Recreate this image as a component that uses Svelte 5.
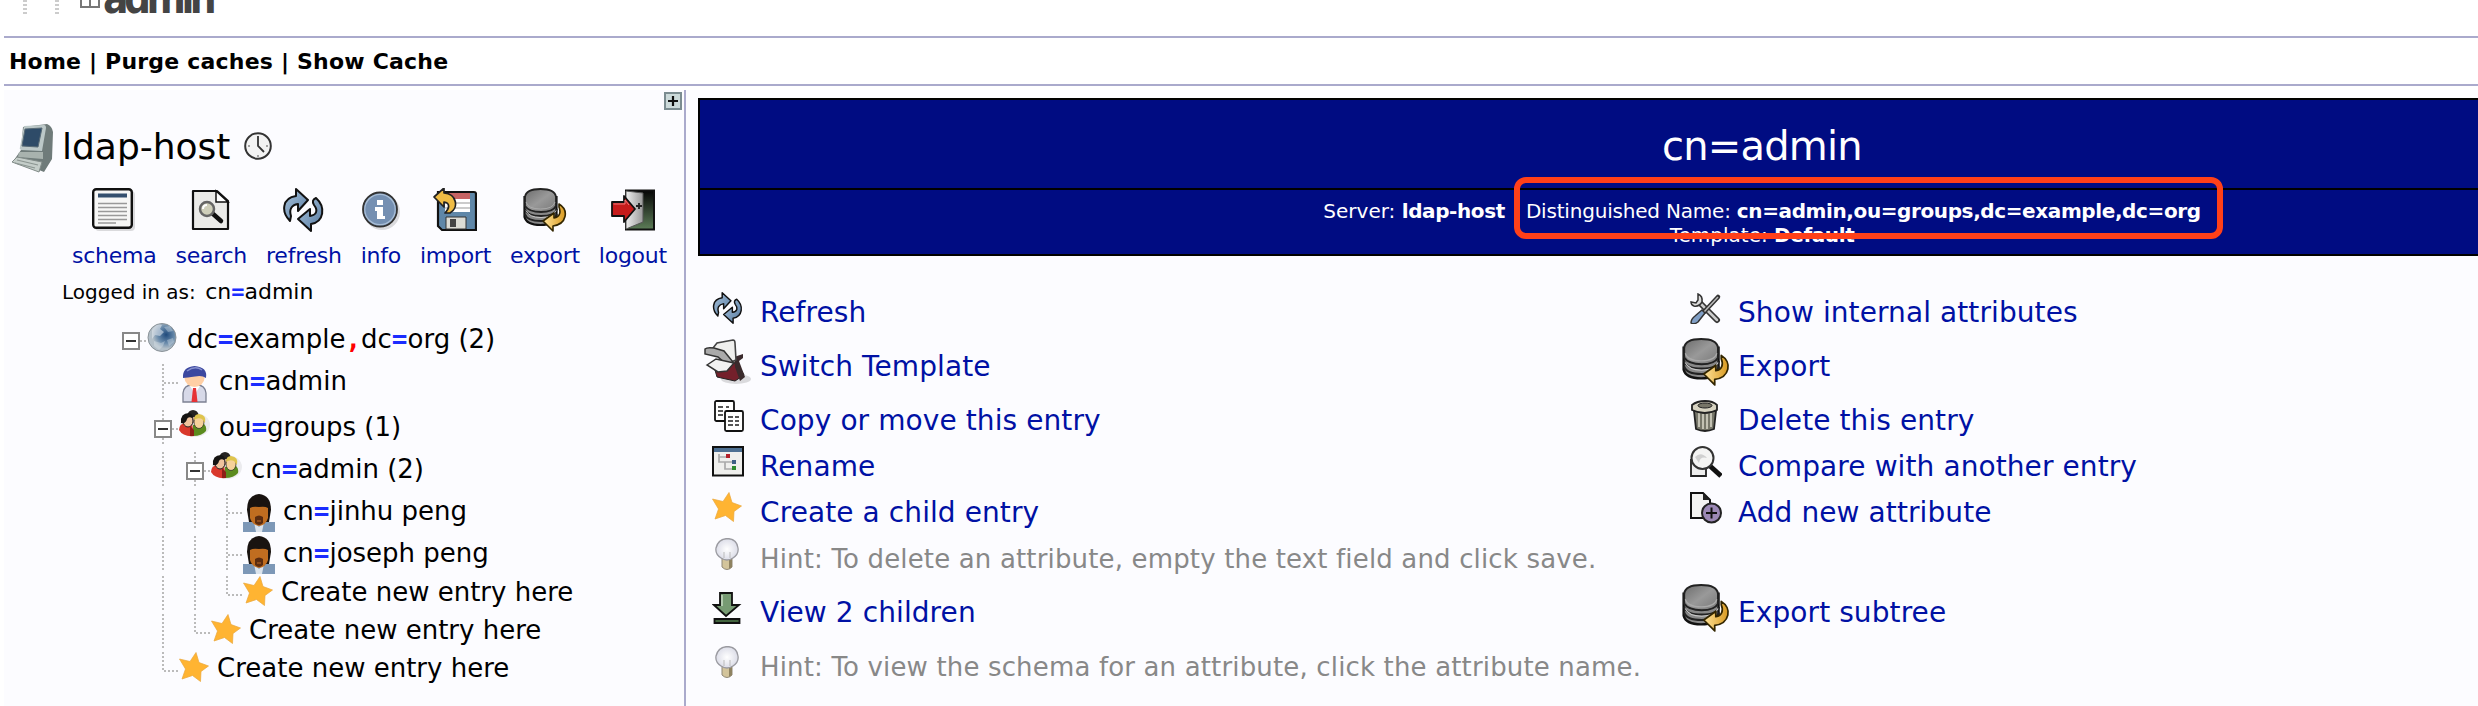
<script>
  const tools = [
    { icon: 'schema', label: 'schema' },
    { icon: 'search', label: 'search' },
    { icon: 'refresh', label: 'refresh' },
    { icon: 'info', label: 'info' },
    { icon: 'import', label: 'import' },
    { icon: 'export', label: 'export' },
    { icon: 'logout', label: 'logout' }
  ];

  const tree = [
    { h: 42, guides: ['box root'], icon: 'globe', dn: ['dc', '=', 'example', ',', 'dc', '=', 'org (2)'] },
    { h: 46, guides: ['', 'tee'], icon: 'person', dn: ['cn', '=', 'admin'] },
    { h: 42, guides: ['', 'box'], icon: 'group', dn: ['ou', '=', 'groups (1)'] },
    { h: 42, guides: ['', 'line', 'box'], icon: 'group', dn: ['cn', '=', 'admin (2)'] },
    { h: 42, guides: ['', 'line', 'line', 'tee'], icon: 'user', dn: ['cn', '=', 'jinhu peng'] },
    { h: 40, guides: ['', 'line', 'line', 'tee'], icon: 'user', dn: ['cn', '=', 'joseph peng'] },
    { h: 38, guides: ['', 'line', 'line', 'end'], icon: 'star', create: true },
    { h: 38, guides: ['', 'line', 'end'], icon: 'star', create: true },
    { h: 38, guides: ['', 'end'], icon: 'star', create: true }
  ];

  const actions = [
    [{ icon: 'refresh', label: 'Refresh' }, { icon: 'tools', label: 'Show internal attributes' }],
    [{ icon: 'switch', label: 'Switch Template', big: true }, { icon: 'export', label: 'Export', big: true }],
    [{ icon: 'copy', label: 'Copy or move this entry' }, { icon: 'trash', label: 'Delete this entry' }],
    [{ icon: 'rename', label: 'Rename' }, { icon: 'compare', label: 'Compare with another entry' }],
    [{ icon: 'star', label: 'Create a child entry' }, { icon: 'add', label: 'Add new attribute' }],
    [{ icon: 'bulb', label: 'Hint: To delete an attribute, empty the text field and click save.', hint: true }],
    [{ icon: 'down', label: 'View 2 children' }, { icon: 'export', label: 'Export subtree', big: true }],
    [{ icon: 'bulb', label: 'Hint: To view the schema for an attribute, click the attribute name.', hint: true }]
  ];
</script>

{#snippet icon(name)}
  {#if name === 'schema'}
    <svg viewBox="0 0 44 44"><rect x="3" y="3" width="40" height="40" rx="4" fill="#0002" /><rect x="1.2" y="1.2" width="38.6" height="38.6" rx="3" fill="#f7f7f6" stroke="#111" stroke-width="2.4" /><rect x="6" y="5.500" width="29" height="4" fill="#35506f" /><path d="M6 15.500h29M6 19.500h29M6 23.500h29M6 27.500h29M6 31.500h29M6 35h18" stroke="#999" stroke-width="1.700" /></svg>
  {:else if name === 'search'}
    <svg viewBox="0 0 44 44"><path d="M4 3h24l11 10v28H4z" fill="#ebebe9" stroke="#111" stroke-width="2.200" stroke-linejoin="round" /><path d="M27 3v11h12z" fill="#fff" stroke="#111" stroke-width="1.500" /><path d="m23 25 9 8" stroke="#111" stroke-width="4.500" stroke-linecap="round" /><circle cx="18" cy="21" r="7" fill="#cfcfba" stroke="#666" stroke-width="2.500" /><path d="M14 21q0-4 4-4" stroke="#fff" stroke-width="2" fill="none" /></svg>
  {:else if name === 'refresh'}
    <svg viewBox="0 0 44 44"><g fill="url(#blue)" stroke="#111" stroke-width="2" stroke-linejoin="round"><path d="M8 33C-1 24 0 10 14 8V1l12 11-10 11v-7c-7 1-9 6-7 12z" /><path d="M34 10c10 9 8 24-5 26v7L16 31l12-10v7c7-1 8-6 4-11q-3-5 2-7z" /></g></svg>
  {:else if name === 'info'}
    <svg viewBox="0 0 44 44"><circle cx="22" cy="24" r="18" fill="#0002" /><circle cx="20" cy="21.500" r="17" fill="#7590b2" stroke="#333" stroke-width="1.800" /><circle cx="20" cy="21.500" r="15.200" fill="none" stroke="#a9bed6" stroke-width="1.200" /><path d="M17 12h6v5h-6zM15 19h8v9h2v3H17v-8h-2z" fill="#fff" /></svg>
  {:else if name === 'import'}
    <svg viewBox="0 0 44 44"><path d="M5 4h36q2 0 2 2v36H9l-4-4z" fill="#5f87a8" stroke="#111" stroke-width="2.200" /><path d="M12 5h25v19H12z" fill="#fff" /><path d="M12 5h25v6H12z" fill="#c76363" /><path d="M12 15h25M12 20h25" stroke="#bbb" stroke-width="1.500" /><path d="M13 29h20v12H13z" fill="#dcdcd5" stroke="#333" /><path d="M17 31h6v8h-6z" fill="#444" /><path d="M1 9 11 0v5c13 1 15 15 6 20h-5c5-5 5-10-1-11v5z" fill="#efbc45" stroke="#222" stroke-width="1.700" stroke-linejoin="round" /></svg>
  {:else if name === 'export'}
    <svg viewBox="0 0 44 44"><path d="M1.500 9v20q2 8 16 8t16-8V9z" fill="#888" stroke="#111" stroke-width="2.200" /><path d="M2 21q2 7 16 7t16-7M2 26q2 7 16 7t16-7" fill="none" stroke="#222" stroke-width="1.800" /><path d="M3 22.500q3 7 15 7t15-7" fill="none" stroke="#c7c7c7" /><path d="M2 9q1-8 15.500-8T33 9v9q-3 6-15 6T2 18z" fill="url(#gray)" stroke="#222" stroke-width="1.800" /><path d="M3 14q2 7 14.500 7T32 14" fill="none" stroke="#aaa" /><path d="M36 16c10 6 8 20-6 22v5L20 33l11-8v5c6-1 7-6 5-11z" fill="url(#gold)" stroke="#332600" stroke-width="1.600" stroke-linejoin="round" /></svg>
  {:else if name === 'logout'}
    <svg viewBox="0 0 44 44"><path d="M15 2.500h28v39H15z" fill="url(#door)" stroke="#111" stroke-width="2" /><path d="m15 3 17 2v29l-17 7z" fill="url(#panel)" stroke="#555" /><path d="M25 18h6M28 15v6" stroke="#222" stroke-width="1.800" /><path d="M1 14h12V8l11 13-11 13v-6H1z" fill="#c61b1b" stroke="#111" stroke-width="1.800" stroke-linejoin="round" /><path d="M2.500 16H14v-4l4 5" fill="none" stroke="#ee7a7a" /></svg>
  {:else if name === 'globe'}
    <svg viewBox="0 0 32 32"><circle cx="15" cy="15.500" r="14" fill="url(#earth)" stroke="#8a9298" /><path d="M5 8q5-7 10-5l-2 4 4 3-4 4-5-1-3 4z" fill="#e3eaf0" opacity=".55" /><path d="M17 5l6-1 3 5-5 1zM7 19l7 2 4-2-2 5-4 4-5-4zM20 18l6-2 1 4-5 4z" fill="#e3eaf0" opacity=".35" /></svg>
  {:else if name === 'person'}
    <svg viewBox="0 0 32 40"><path d="M4 38V29q1-8 9-8h5q8 0 9 8v9z" fill="#d7d9e8" stroke="#7c8092" stroke-width="1.300" /><path d="m11 22 5 8 5-8z" fill="#fff" /><path d="m14 24-1.500 14h6L17 24z" fill="#e63236" /><ellipse cx="15.500" cy="14" rx="10" ry="9" fill="#ffcfa5" /><path d="M4 14Q3 3 15.500 2 29 3 27 14q-4-3-11-1.500-8 1-12 1.500z" fill="#3c48a0" /><path d="M8 7q8-6 15-1" stroke="#8791ce" stroke-width="1.500" fill="none" /></svg>
  {:else if name === 'group'}
    <svg viewBox="0 0 32 32"><ellipse cx="16" cy="15" rx="15" ry="12" fill="#0001" /><circle cx="14" cy="5.500" r="5.500" fill="#262321" /><path d="M10 7h9v6h-9z" fill="#c9a08a" /><path d="M0 20q0-6 6-7h7l2 13Q4 27 0 20z" fill="#d9382c" /><path d="M14 26V15l10-2q4 3 3 8-4 5-13 5z" fill="#5b8b1e" /><ellipse cx="9" cy="11" rx="5" ry="6" fill="#efc39e" stroke="#222" /><path d="M2 13q-1-10 8-10 4 1 4 5-5-2-6 1-1 5-6 4z" fill="#151413" /><ellipse cx="20" cy="12" rx="5" ry="6.500" fill="#f6d19a" stroke="#222" stroke-width=".7" /><path d="M15 10q0-6 5-6 8 1 6 9l-3-4q-4-2-8 1z" fill="#dfc44d" /><path d="M11 26V16l4 4v6z" fill="#8d2018" /></svg>
  {:else if name === 'user'}
    <svg viewBox="0 0 32 38"><path d="M0 38V28h32v10z" fill="#7d98b7" /><path d="m11 28 5 5 5-5-2 10h-6z" fill="#dbe3ec" /><path d="M4 16Q4 1 16 0q12 1 12 16l-2 12H6z" fill="#191310" /><path d="M7 14q3-2 9-1 6-1 9 1v10q-2 7-9 8-7-1-9-8z" fill="#c06d20" /><path d="M12 23q4-3 8 0v6q-4 4-8 0z" fill="#5b2c10" /><path d="M14 26h4v2h-4z" fill="#8b4a1c" /></svg>
  {:else if name === 'star'}
    <svg viewBox="0 0 32 32"><path d="M17 .5 20 10.500 29.500 14 22 19.500 21.500 29.500 13.500 23.500 3 27 6.500 17 .500 7 11 9.500z" fill="#ffb432" stroke="#e9a63a" stroke-width=".7" /></svg>
  {:else if name === 'switch'}
    <svg viewBox="0 0 48 48"><ellipse cx="32" cy="41" rx="15" ry="5" fill="#0002" /><path d="m11 32 22-8 7 13-9 6-18-4z" fill="#74202b" stroke="#222" /><path d="m30 19 9-3v4l-4 3 6 16-5 4-5-14z" fill="#3a2a2c" /><path d="m9 10 4-5 16-3q2 0 2 3l1 17-12 5z" fill="#efefed" stroke="#444" stroke-width="1.600" /><path d="M1 11q2-2 9-1l10 3 9 11-7 2-8-7L1 16z" fill="#aaa" stroke="#333" stroke-width="1.500" /><path d="m3 27 9-6 18 4-7 8-9 1z" fill="#f2f2f2" stroke="#333" stroke-width="1.500" /></svg>
  {:else if name === 'copy'}
    <svg viewBox="0 0 32 32"><g fill="#fff" stroke="#111" stroke-width="1.800"><rect x="3" y="1" width="19" height="20" rx="1.500" /><rect x="13" y="11" width="18" height="20" rx="1.500" /></g><path d="M6 7h5M14 7h3M6 11h5M6 15h5M16 17h5M23 17h4M16 21h5M23 21h4M16 25h5M23 25h4" stroke="#555" stroke-width="1.800" /></svg>
  {:else if name === 'rename'}
    <svg viewBox="0 0 32 32"><rect x="1" y="1" width="30" height="28.500" fill="#efefed" stroke="#111" stroke-width="2" /><path d="M2 2h28v4H2z" fill="#4d6f92" /><path d="M7 8v8h5M7 11h7M12 16h8M13 16v7h7" fill="none" stroke="#aaa" stroke-width="1.700" /><path d="M14 8h4v4h-4z" fill="#b3202a" /><path d="M20 14h4v4h-4z" fill="#3f5f85" /><path d="M20 20h4v4h-4z" fill="#2e8b2e" /></svg>
  {:else if name === 'bulb'}
    <svg viewBox="0 0 32 32"><path d="M10 20h10v9q-5 5-10 0z" fill="#d3c49b" stroke="#908878" /><path d="M17 20h3v9l-3 2z" fill="#8e8261" /><path d="M9 20Q3 16 4 10q2-9 11.500-9.500Q25 1 26 10q1 6-5 10-6 4-12 0z" fill="url(#glass)" stroke="#9a9aa0" stroke-width="1.300" /><path d="M12 14v6M18 14v6" stroke="#bbb" /></svg>
  {:else if name === 'down'}
    <svg viewBox="0 0 32 32"><path d="M8 1h12v12h7L14 24 2 13h6z" fill="#779b73" stroke="#111" stroke-width="1.800" /><path d="M10 3v11" stroke="#b4cbb0" stroke-width="2" /><path d="M2.500 27h25v4h-25z" fill="#42643e" stroke="#111" stroke-width="1.800" /></svg>
  {:else if name === 'tools'}
    <svg viewBox="0 0 32 32"><path d="m10 11 17 17" stroke="#333" stroke-width="6" stroke-linecap="round" /><path d="m9 10 18 18" stroke="#ccc" stroke-width="2.500" stroke-linecap="round" /><path d="M8 2q5 2 4 8-3 5-8 4-3-1-3-4l5 1 2-3z" fill="#ddd" stroke="#333" stroke-width="1.500" /><path d="M28 5 14 20" stroke="#333" stroke-width="4.500" stroke-linecap="round" /><path d="M28 5 14 20" stroke="#bbb" stroke-width="1.500" /><path d="m12 18 3 3-7 9q-4 3-7 1 0-4 4-7z" fill="#809fc6" stroke="#333" stroke-width="1.500" /></svg>
  {:else if name === 'trash'}
    <svg viewBox="0 0 32 32"><path d="M4 11h22l-2 18q-9 4-18 0z" fill="#77776a" stroke="#222" stroke-width="1.800" /><path d="M9 13v14M13 14v15M17 14v15M21 13v14" stroke="#d0cec0" stroke-width="1.700" /><path d="M2 5q5-4 13-4t12 4v5q-12 6-25 0z" fill="#d7d3c1" stroke="#222" stroke-width="1.800" /><ellipse cx="15" cy="5.500" rx="7" ry="2.500" fill="#777567" stroke="#222" /></svg>
  {:else if name === 'compare'}
    <svg viewBox="0 0 32 32"><path d="M1 14v16h15V14z" fill="#ededed" stroke="#222" stroke-width="1.800" /><path d="m20 20 11 10" stroke="#111" stroke-width="5" /><circle cx="12.500" cy="12" r="11" fill="#f4f4f3" stroke="#333" stroke-width="2" /><path d="M5 11q6-6 12 1-7-2-8 5" fill="#d0d0d0" /></svg>
  {:else if name === 'add'}
    <svg viewBox="0 0 32 32"><path d="M1 1h12l7 7v18H1z" fill="#f3f3f1" stroke="#111" stroke-width="2" /><path d="M13 1v7h7z" fill="#222" /><circle cx="21.500" cy="21" r="9.500" fill="#9b88b5" stroke="#222" stroke-width="2" /><path d="M16 21h11M21.500 15.500v11" stroke="#111" stroke-width="2" /></svg>
  {/if}
{/snippet}

<svg class="defs" aria-hidden="true"><defs>
  <linearGradient id="blue" x2="1" y2="1"><stop stop-color="#a9c4dd" /><stop offset="1" stop-color="#55799f" /></linearGradient>
  <linearGradient id="gray" x2="1" y2="1"><stop stop-color="#6d6d6d" /><stop offset=".5" stop-color="#999" /><stop offset="1" stop-color="#777" /></linearGradient>
  <linearGradient id="gold"><stop stop-color="#ffe39a" /><stop offset="1" stop-color="#d99a20" /></linearGradient>
  <linearGradient id="door" y2="1" x2="0"><stop stop-color="#050505" /><stop offset="1" stop-color="#5d7d58" /></linearGradient>
  <linearGradient id="panel"><stop stop-color="#eee" /><stop offset="1" stop-color="#999" /></linearGradient>
  <radialGradient id="earth" cx=".65" cy=".4"><stop stop-color="#204a7c" /><stop offset=".6" stop-color="#6a8bab" /><stop offset="1" stop-color="#b3bfc8" /></radialGradient>
  <radialGradient id="glass"><stop stop-color="#fff" /><stop offset="1" stop-color="#dcdde8" /></radialGradient>
</defs></svg>

<div class="page">
  <header class="logo">
    <i class="dots"></i><i class="dots"></i>
    <span class="logobox"></span><span class="logotext">admin</span>
  </header>
  <nav class="menu">Home | Purge caches | Show Cache</nav>

  <div class="body">
    <aside>
      <div class="expand"><svg viewBox="0 0 18 18"><rect x="1" y="1" width="16" height="16" fill="#ccdada" stroke="#7b8c90" stroke-width="2" /><path d="M4 9h10M9 4v10" stroke="#111" stroke-width="2.200" /></svg></div>
      <div class="host">
        <svg class="computer" viewBox="0 0 42 50"><path d="m11 4 24-3q5 2 6 8l-1 27-8 13L2 37l7-10z" fill="#6f7b7a" /><path d="m12 3 20-1q2 0 2 3l-4 23-21-1q-2-1-1-3z" fill="#bcc8c8" /><path d="m13 6 17-1-4 19-16-1z" fill="#2e4b68" stroke="#576a76" /><path d="M7 29h24v7L6 34z" fill="#a8b2ae" /><path d="m5 34 25 5-3 10L0 39z" fill="#c4cdc9" stroke="#818b88" /><path d="m5 37 21 5M3 40l20 5" stroke="#8b9591" stroke-width="1.200" /></svg>
        <span>ldap-host</span>
        <svg class="clock" viewBox="0 0 28 28"><circle cx="14" cy="14" r="12.800" fill="#f3f3f3" stroke="#333" stroke-width="2" /><path d="M14 4v10l6 6" fill="none" stroke="#333" stroke-width="1.800" /><path d="M4 14h2M22 14h2M14 23v2" stroke="#888" stroke-width="1.500" /></svg>
      </div>
      <div class="tools">
        {#each tools as t}
          <a class="tool {t.icon}" href="#{t.icon}"><span class="ico">{@render icon(t.icon)}</span><span>{t.label}</span></a>
        {/each}
      </div>
      <div class="login">Logged in as: <span class="who">cn<b class="eq">=</b>admin</span></div>
      <div class="tree">
        {#each tree as r}
          <div class="node" style:height="{r.h}px">
            {#each r.guides as g}
              <span class="guide {g}">{#if g.startsWith('box')}<i class="minus"></i>{/if}</span>
            {/each}
            <span class="nodeicon {r.icon}">{@render icon(r.icon)}</span>
            {#if r.create}
              <span class="text create">Create new entry here</span>
            {:else}
              <span class="text">{#each r.dn as p}{#if p === '='}<b class="eq">=</b>{:else if p === ','}<b class="comma">,</b>{:else}{p}{/if}{/each}</span>
            {/if}
          </div>
        {/each}
      </div>
    </aside>

    <main>
      <section class="entry">
        <h1>cn=admin</h1>
        <div class="facts">
          <div class="fact"><span>Server: <b>ldap-host</b></span><span class="dn">Distinguished Name: <b>cn=admin,ou=groups,dc=example,dc=org</b><i class="mark"></i></span></div>
          <div class="fact"><span>Template: <b>Default</b></span></div>
        </div>
      </section>
      <section class="actions">
        {#each actions as row}
          <div class="row" class:tall={row.some((a) => a.big)}>
            {#each row as a}
              <a class="action" class:hint={a.hint} href="#{a.icon}"><span class="aico" class:big={a.big}>{@render icon(a.icon)}</span><span class="label">{a.label}</span></a>
            {/each}
          </div>
        {/each}
      </section>
    </main>
  </div>
</div>

<style>
  :global(body) { background: #fff; overflow: hidden; }
  .page { width: 2478px; height: 706px; overflow: hidden; font-family: Verdana, "DejaVu Sans", sans-serif; color: #000; }
  svg { display: block; width: 100%; height: 100%; }
  .defs { position: absolute; width: 0; height: 0; }
  a { color: #0011a4; text-decoration: none; }
  .logo { display: flex; height: 36px; margin-left: 4px; border-bottom: 2px solid #aac; overflow: hidden; }
  .dots { width: 4px; height: 16px; margin: 0 0 0 19px; background: repeating-linear-gradient(#ccc 0 2px, transparent 2px 4px); flex: none; }
  .dots + .dots { margin-left: 28px; }
  .logobox { box-sizing: border-box; width: 20px; height: 22px; margin: -14px 3px 0 21px; border: 2px solid #777; background: linear-gradient(#777, #777) center / 2px 100% no-repeat; }
  .logotext { font: bold 42px/42px "DejaVu Sans Condensed", "DejaVu Sans"; color: #444; margin-top: -22px; letter-spacing: -4.5px; }
  .menu { height: 46px; margin-left: 4px; border-bottom: 2px solid #aac; padding-left: 5px; font-weight: bold; font-size: 22px; line-height: 48px; white-space: pre; letter-spacing: .2px; }
  .body { display: flex; margin: 4px 0 0 4px; height: 616px; background: #fcfcff; }
  aside { box-sizing: border-box; flex: none; width: 682px; border-right: 2px solid #aac; }
  .expand { width: 18px; height: 18px; margin: 2px 2px 0 auto; }
  .host { display: flex; height: 64px; padding: 14px 0 0 8px; font-size: 36px; box-sizing: border-box; line-height: 45px; }
  .computer { width: 42px; height: 50px; margin-right: 8px; margin-top: -1px; }
  .clock { width: 28px; height: 28px; margin: 8px 0 0 14px; }
  .tools { display: flex; gap: 19px; padding: 14px 0 0 68px; font-size: 22px; letter-spacing: -.25px; }
  .tool { display: flex; flex-direction: column; align-items: center; line-height: 26px; }
  .ico { width: 44px; height: 44px; margin-bottom: 11px; }
  .info .ico { margin-left: -2px; margin-right: -4px; }
  .login { margin: 8px 0 0 58px; font-size: 20px; line-height: 30px; white-space: pre; }
  .who { font-size: 22px; margin-left: 3px; }
  .eq, .comma { font-family: "DejaVu Sans Mono", monospace; line-height: 1; }
  .eq { color: #1a2cff; }
  .comma { color: red; }
  .tree { margin: 15px 0 0 111px; font-size: 26px; }
  .node { display: flex; }
  .guide { flex: none; width: 32px; height: 34px; }
  .line, .tee, .box { background: repeating-linear-gradient(#bbb 0 2px, transparent 2px 4px) 15px 0 / 2px 34px no-repeat; }
  .end { background: repeating-linear-gradient(#bbb 0 2px, transparent 2px 4px) 15px 0 / 2px 20px no-repeat, repeating-linear-gradient(90deg, #bbb 0 2px, transparent 2px 4px) 17px 18px / 15px 2px no-repeat; }
  .tee { background: repeating-linear-gradient(#bbb 0 2px, transparent 2px 4px) 15px 0 / 2px 34px no-repeat, repeating-linear-gradient(90deg, #bbb 0 2px, transparent 2px 4px) 17px 18px / 15px 2px no-repeat; }
  .root { background: none; }
  .box { display: flex; }
  .minus { box-sizing: border-box; width: 18px; height: 18px; margin: 10px 0 0 7px; border: 2px solid #888; background: linear-gradient(#333, #333) center / 10px 2px no-repeat #fff; }
  .box::after { content: ''; width: 7px; height: 2px; margin-top: 18px; background: repeating-linear-gradient(90deg, #bbb 0 2px, transparent 2px 4px); }
  .nodeicon { width: 32px; height: 32px; flex: none; margin-right: 8px; }
  .nodeicon.person { height: 40px; }
  .nodeicon.user { height: 38px; }
  .text { line-height: 34px; white-space: pre; }
  .create { margin: -1px 0 0 -2px; }
  main { flex: none; width: 2128px; margin: 8px 0 0 12px; }
  .entry { box-sizing: border-box; height: 158px; border: 2px solid #000; background: #000c82; color: #fff; text-align: center; }
  h1 { margin: 0; height: 88px; font-size: 40px; font-weight: normal; line-height: 92px; letter-spacing: -.8px; border-bottom: 2px solid #000; }
  .facts { padding-top: 9px; font-size: 20px; line-height: 24px; }
  .fact { display: flex; justify-content: center; white-space: pre; gap: 21px; }
  .fact b { letter-spacing: -.39px; }
  .dn { position: relative; letter-spacing: -.2px; }
  .mark { position: absolute; box-sizing: border-box; left: -12px; right: -22px; top: -22px; height: 62px; border: 6px solid #ff4019; border-radius: 12px; }
  .actions { padding-top: 34px; margin-left: 6px; font-size: 28px; }
  .row { display: flex; height: 46px; }
  .tall { height: 62px; }
  .action { display: flex; align-items: center; flex: none; width: 978px; white-space: pre; letter-spacing: .09px; }
  .label { margin-bottom: 2px; }
  .aico { width: 32px; height: 32px; margin: 0 16px 10px 8px; flex: none; }
  .aico.big { width: 48px; height: 48px; margin: 0 8px 10px 0; }
  .hint { color: #888; font-size: 26px; letter-spacing: .155px; }
  .hint .label { margin-bottom: 0; }
</style>
